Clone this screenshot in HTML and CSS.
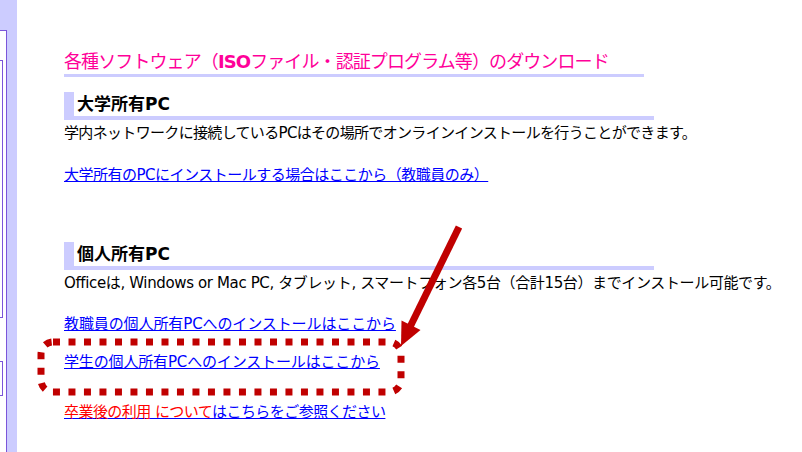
FILE: index.html
```html
<!DOCTYPE html>
<html lang="ja">
<head>
<meta charset="utf-8">
<title>各種ソフトウェアのダウンロード</title>
<link rel="stylesheet" href="styles.css">
</head>
<body>
<div class="page">
  <aside class="sidebar">
    <div class="panel">
      <div class="box box-a"></div>
      <div class="box box-b"></div>
    </div>
  </aside>
  <main class="content">
    <h2 class="title">各種ソフトウェア（<b>ISO</b>ファイル・認証プログラム等）のダウンロード</h2>
    <h3 class="sec sec-1">大学所有PC</h3>
    <p class="txt txt-1">学内ネットワークに接続しているPCはその場所でオンラインインストールを行うことができます。</p>
    <p class="lnk lnk-1"><a href="#">大学所有のPCにインストールする場合はここから（教職員のみ）</a></p>
    <h3 class="sec sec-2">個人所有PC</h3>
    <p class="txt txt-2">Officeは, Windows or Mac PC, タブレット, スマートフォン各5台（合計15台）までインストール可能です。</p>
    <p class="lnk lnk-2"><a href="#">教職員の個人所有PCへのインストールはここから</a></p>
    <p class="lnk lnk-3"><a href="#">学生の個人所有PCへのインストールはここから</a></p>
    <p class="lnk lnk-4"><a href="#"><span class="red">卒業後の利用 について</span>はこちらをご参照ください</a></p>
  </main>
  <svg class="overlay" width="802" height="452" viewBox="0 0 802 452">
    <rect x="41" y="342" width="360" height="50" rx="12" ry="12" fill="none" stroke="#c00000" stroke-width="7" stroke-dasharray="7 8.5"/>
    <line x1="459" y1="227" x2="410" y2="327" stroke="#c00000" stroke-width="7"/>
    <polygon points="401,346 401.5,320.5 420.5,330" fill="#c00000"/>
  </svg>
</div>
</body>
</html>
```
FILE: styles.css
```css
html, body {
  margin: 0;
  padding: 0;
  background: #ffffff;
}
body {
  font-family: "DejaVu Sans", "Noto Sans CJK JP", sans-serif;
  font-size: 15px;
  color: #000;
}
.page {
  position: relative;
  width: 802px;
  height: 452px;
  overflow: hidden;
  display: flex;
}
.sidebar {
  width: 17px;
  flex: none;
  background: #ccccff;
  display: flex;
  flex-direction: column;
}
.panel {
  margin-top: 30px;
  width: 7px;
  flex: 1;
  background: #ffffff;
  border-top: 1px solid #7b55d9;
  border-right: 1px solid #7b55d9;
  box-sizing: border-box;
  display: flex;
  flex-direction: column;
}
.box {
  width: 2px;
  border-top: 1px solid #7b55d9;
  border-right: 1px solid #7b55d9;
  border-bottom: 1px solid #7b55d9;
}
.box-a { margin-top: 29px; height: 256px; }
.box-b { margin-top: 43px; height: 33px; }
.content {
  padding-left: 47px;
  flex: 1;
}
.title {
  margin: 50px 0 0 0;
  width: 580px;
  font-size: 18px;
  font-weight: normal;
  line-height: 24px;
  color: #ff0099;
  border-bottom: 3px solid #ccccff;
  letter-spacing: -0.9px;
  white-space: nowrap;
}
.title b { font-weight: bold; }
.sec {
  margin: 0;
  width: 590px;
  box-sizing: border-box;
  height: 28px;
  font-size: 17px;
  line-height: 24px;
  font-weight: bold;
  border-left: 10px solid #ccccff;
  border-bottom: 4px solid #ccccff;
  padding-left: 3px;
}
.sec-1 { margin-top: 15px; }
.sec-2 { margin-top: 57px; }
.txt, .lnk {
  margin: 0;
  line-height: 20px;
  white-space: nowrap;
}
.txt-1 { margin-top: 3px; letter-spacing: -0.67px; }
.txt-2 { margin-top: 3px; letter-spacing: -0.37px; }
.lnk-1 { margin-top: 22px; letter-spacing: -0.5px; }
.lnk-2 { margin-top: 21px; letter-spacing: -0.1px; }
.lnk-3 { margin-top: 18px; letter-spacing: -0.15px; }
.lnk-4 { margin-top: 30px; letter-spacing: -0.55px; }
a {
  color: #0000ff;
  text-decoration: underline;
}
.red { color: #ff0000; }
.overlay {
  position: absolute;
  left: 0;
  top: 0;
  pointer-events: none;
}
```
